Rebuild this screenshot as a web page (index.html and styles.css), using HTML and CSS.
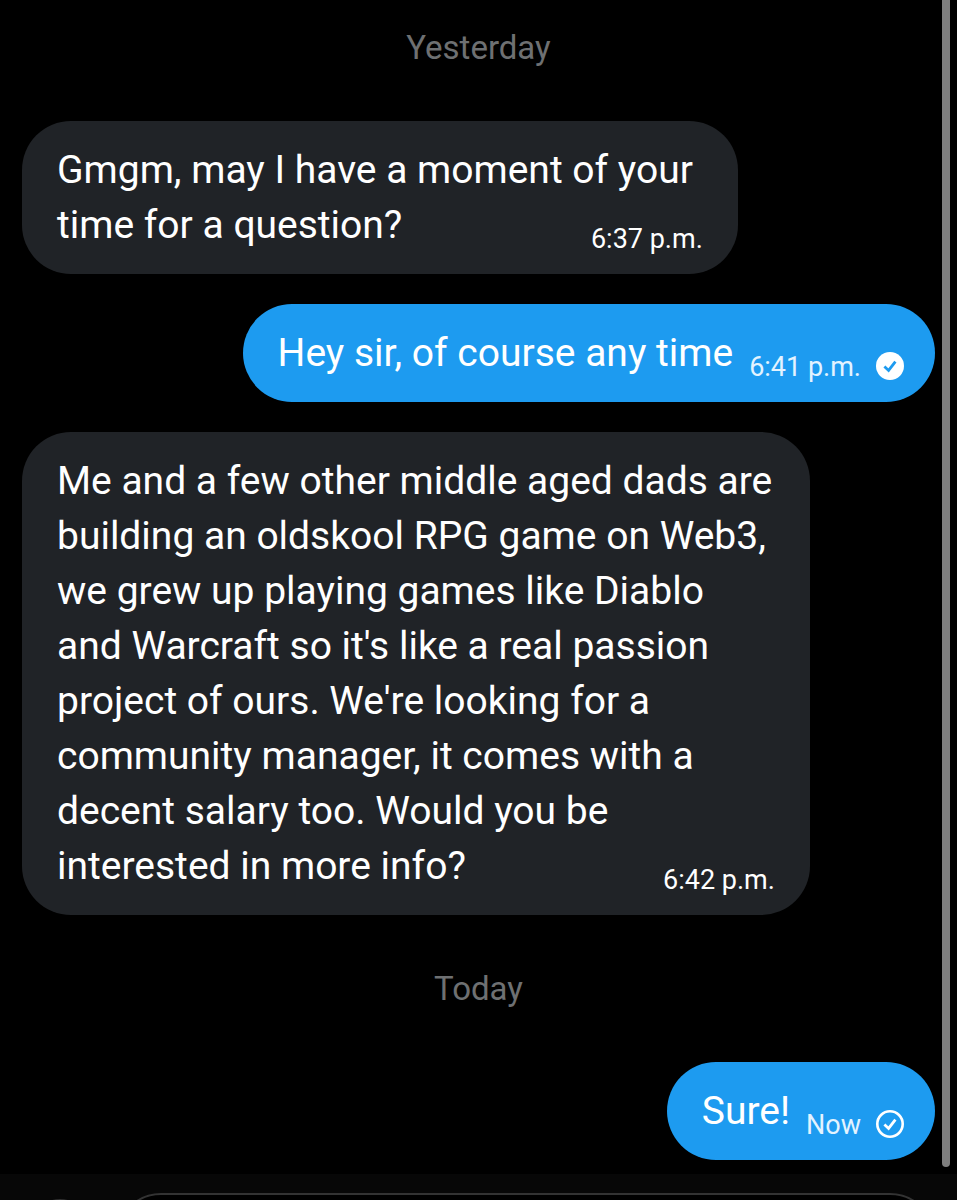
FILE: index.html
```html
<!DOCTYPE html>
<html lang="en">
<head>
  <meta charset="UTF-8">
  <meta name="viewport" content="width=device-width, initial-scale=1">
  <title>Messages</title>
  <link rel="stylesheet" href="styles.css">
</head>
<body>

  <main class="chat">
    <h2 class="day">Yesterday</h2>

    <div class="bubble received short">
      <p class="text">Gmgm, may I have a moment of your<br>time for a question?</p>
      <span class="time">6:37 p.m.</span>
    </div>

    <div class="bubble sent">
      <p class="text">Hey sir, of course any time</p>
      <span class="time">6:41 p.m.</span>
      <svg class="status" viewBox="0 0 28 28" aria-label="Read">
        <circle cx="14" cy="14" r="14" fill="#fff"/>
        <path d="M8.4 14.4l4.2 4 6.8-8.8" fill="none" stroke="#1d9bf0" stroke-width="2.8"/>
      </svg>
    </div>

    <div class="bubble received">
      <p class="text">Me and a few other middle aged dads are<br>building an oldskool RPG game on Web3,<br>we grew up playing games like Diablo<br>and Warcraft so it's like a real passion<br>project of ours. We're looking for a<br>community manager, it comes with a<br>decent salary too. Would you be<br>interested in more info?</p>
      <span class="time">6:42 p.m.</span>
    </div>

    <h2 class="day">Today</h2>

    <div class="bubble sent">
      <p class="text">Sure!</p>
      <span class="time">Now</span>
      <svg class="status" viewBox="0 0 28 28" aria-label="Sent">
        <circle cx="14" cy="14" r="12.7" fill="none" stroke="#fff" stroke-width="2.6"/>
        <path d="M8.4 14.4l4.2 4 6.8-8.8" fill="none" stroke="#fff" stroke-width="2.8"/>
      </svg>
    </div>

    <div class="scrollbar"></div>
  </main>

  <!-- Message composer, continues below the fold -->
  <form class="composer">
    <button class="attach" type="button" aria-label="Add photo"></button>
    <input class="message" type="text" aria-label="Message">
  </form>

</body>
</html>
```
FILE: styles.css
```css
* {
  box-sizing: border-box;
}
body {
  display: flex;
  flex-direction: column;
  margin: 0;
  height: 100vh;
  overflow: hidden;
  background-color: #000;
  color: #fff;
  font-family: Roboto, "Noto Sans", sans-serif;
}
.chat {
  position: relative;
  display: flex;
  flex-direction: column;
  flex-shrink: 0;
  gap: 30px;
  padding: 4px 22px 14px;
}
.day {
  margin: 0;
  padding: 24px 0 23px;
  color: #6e7072;
  font-size: 33px;
  font-weight: 400;
  line-height: 40px;
  text-align: center;
}
.bubble {
  padding: 22px 35px 21px;
  border-radius: 49px;
}
.text {
  margin: 0;
  font-size: 39px;
  line-height: 55px;
  white-space: nowrap;
}
.time {
  margin-bottom: -2px;
  font-size: 27px;
  line-height: 32px;
  white-space: nowrap;
}
/* the time shares the last line of the text */
.received {
  display: grid;
  align-self: flex-start;
  width: 86.3%;
  background-color: #202327;
}
.received.short {
  width: 78.4%;
}
.received .text,
.received .time {
  grid-area: 1 / 1;
}
.received .time {
  align-self: end;
  justify-self: end;
}
.sent {
  display: flex;
  align-self: flex-end;
  align-items: flex-end;
  padding-right: 31px;
  background-color: #1d9bf0;
}
.sent .time {
  margin-left: 16px;
  color: #e3f3ff;
}
.status {
  width: 28px;
  height: 28px;
  margin: 0 0 1px 15px;
}
.scrollbar {
  position: absolute;
  top: 0;
  right: 7px;
  bottom: 7px;
  width: 8px;
  border-radius: 0 0 4px 4px;
  background-color: #7f7f7f;
}
.composer {
  display: flex;
  flex: 1 1 0;
  align-items: flex-start;
  gap: 28px;
  min-height: 0;
  overflow: hidden;
  padding: 19px 22px 0 32px;
  background-color: #070707;
}
.attach {
  width: 56px;
  height: 56px;
  margin-top: 6px;
  border: 2px solid #2f2f2f;
  border-radius: 50%;
  background: none;
}
.message {
  flex: 1;
  height: 90px;
  padding: 0 34px;
  border: 2px solid #333;
  border-radius: 45px;
  background-color: #000;
  color: #fff;
  font: inherit;
  font-size: 39px;
}
```
